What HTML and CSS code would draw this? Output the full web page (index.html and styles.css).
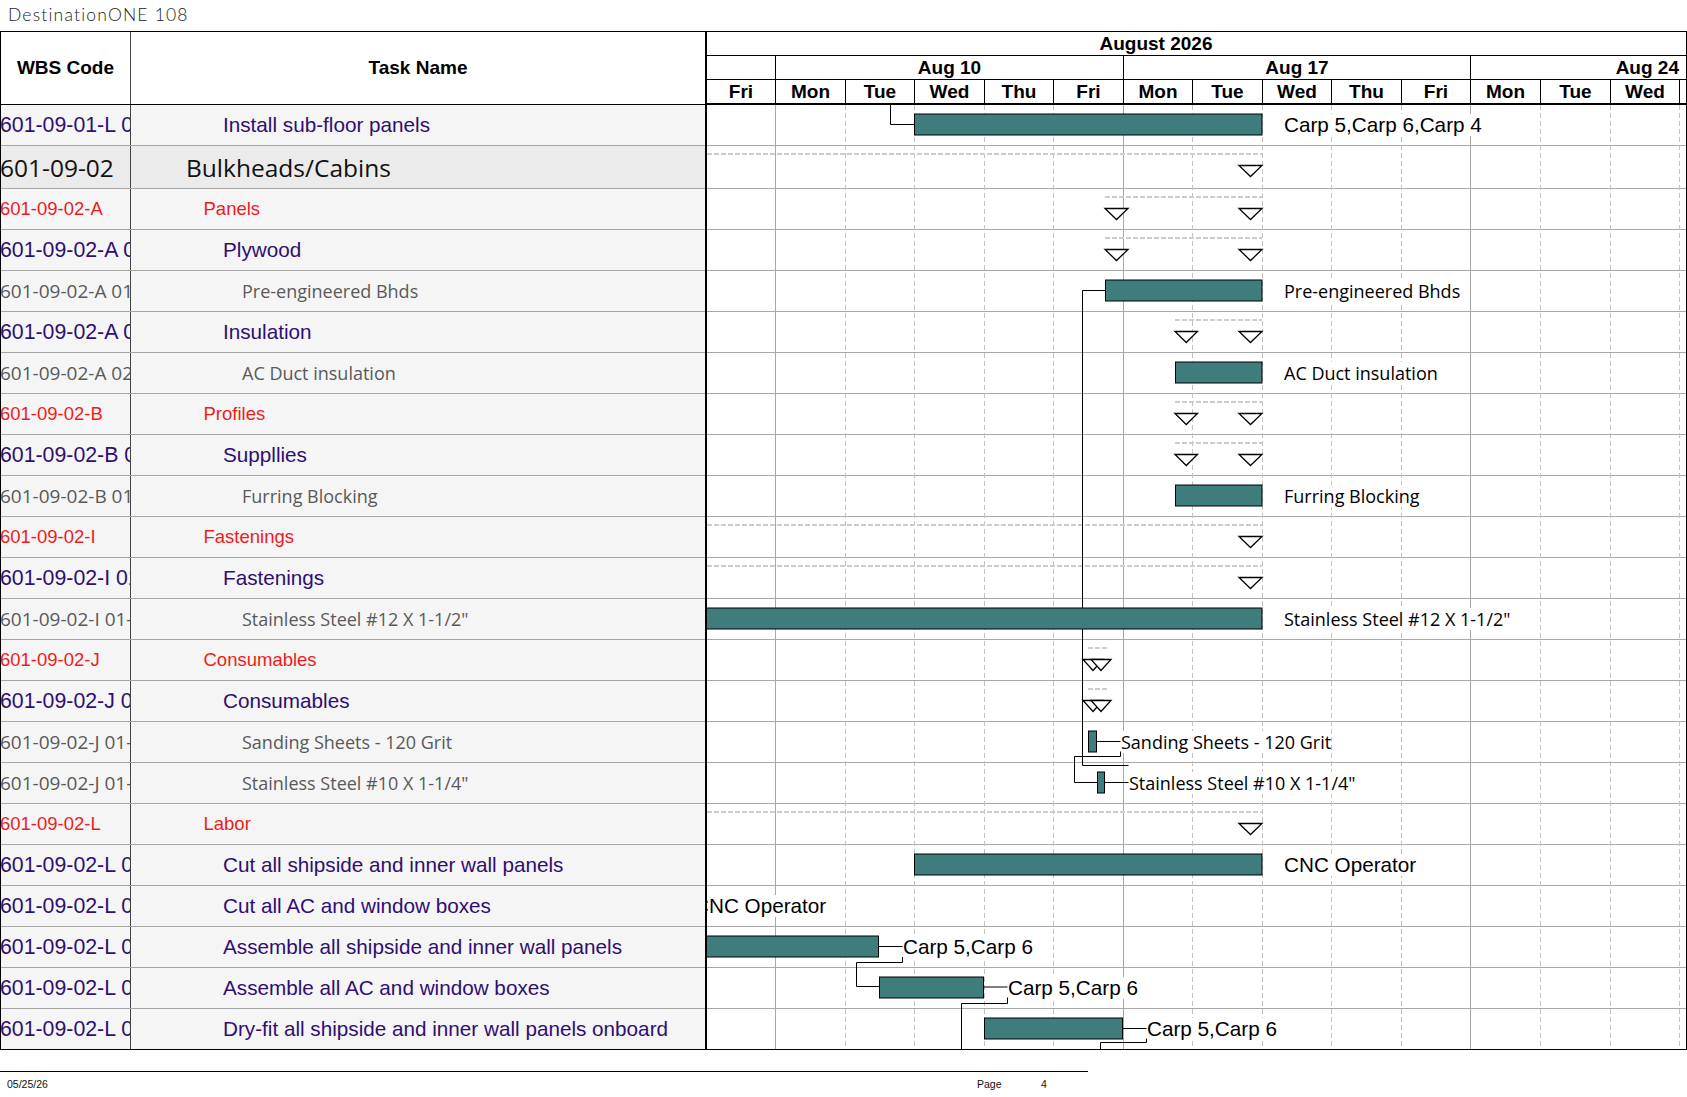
FILE: index.html
```html
<!DOCTYPE html>
<html>
<head>
<meta charset="utf-8">
<title>DestinationONE 108</title>
<link rel="stylesheet" href="styles.css">
</head>
<body>
<div class="title">DestinationONE 108</div>
<div class="chart">
  <div class="table">
    <div class="thead">
      <div class="c-wbs">WBS Code</div>
      <div class="c-task">Task Name</div>
    </div>
    <div class="row r-purple"><div class="c-wbs"><span>601-09-01-L 01</span></div><div class="c-task">Install sub-floor panels</div></div>
    <div class="row r-top"><div class="c-wbs"><span>601-09-02</span></div><div class="c-task">Bulkheads/Cabins</div></div>
    <div class="row r-red"><div class="c-wbs"><span>601-09-02-A</span></div><div class="c-task">Panels</div></div>
    <div class="row r-purple"><div class="c-wbs"><span>601-09-02-A 01</span></div><div class="c-task">Plywood</div></div>
    <div class="row r-grey"><div class="c-wbs"><span>601-09-02-A 01-01</span></div><div class="c-task">Pre-engineered Bhds</div></div>
    <div class="row r-purple"><div class="c-wbs"><span>601-09-02-A 02</span></div><div class="c-task">Insulation</div></div>
    <div class="row r-grey"><div class="c-wbs"><span>601-09-02-A 02-01</span></div><div class="c-task">AC Duct insulation</div></div>
    <div class="row r-red"><div class="c-wbs"><span>601-09-02-B</span></div><div class="c-task">Profiles</div></div>
    <div class="row r-purple"><div class="c-wbs"><span>601-09-02-B 01</span></div><div class="c-task">Suppllies</div></div>
    <div class="row r-grey"><div class="c-wbs"><span>601-09-02-B 01-01</span></div><div class="c-task">Furring Blocking</div></div>
    <div class="row r-red"><div class="c-wbs"><span>601-09-02-I</span></div><div class="c-task">Fastenings</div></div>
    <div class="row r-purple"><div class="c-wbs"><span>601-09-02-I 01</span></div><div class="c-task">Fastenings</div></div>
    <div class="row r-grey"><div class="c-wbs"><span>601-09-02-I 01-01</span></div><div class="c-task">Stainless Steel #12 X 1-1/2"</div></div>
    <div class="row r-red"><div class="c-wbs"><span>601-09-02-J</span></div><div class="c-task">Consumables</div></div>
    <div class="row r-purple"><div class="c-wbs"><span>601-09-02-J 01</span></div><div class="c-task">Consumables</div></div>
    <div class="row r-grey"><div class="c-wbs"><span>601-09-02-J 01-01</span></div><div class="c-task">Sanding Sheets - 120 Grit</div></div>
    <div class="row r-grey"><div class="c-wbs"><span>601-09-02-J 01-02</span></div><div class="c-task">Stainless Steel #10 X 1-1/4"</div></div>
    <div class="row r-red"><div class="c-wbs"><span>601-09-02-L</span></div><div class="c-task">Labor</div></div>
    <div class="row r-purple"><div class="c-wbs"><span>601-09-02-L 01</span></div><div class="c-task">Cut all shipside and inner wall panels</div></div>
    <div class="row r-purple"><div class="c-wbs"><span>601-09-02-L 02</span></div><div class="c-task">Cut all AC and window boxes</div></div>
    <div class="row r-purple"><div class="c-wbs"><span>601-09-02-L 03</span></div><div class="c-task">Assemble all shipside and inner wall panels</div></div>
    <div class="row r-purple"><div class="c-wbs"><span>601-09-02-L 04</span></div><div class="c-task">Assemble all AC and window boxes</div></div>
    <div class="row r-purple"><div class="c-wbs"><span>601-09-02-L 05</span></div><div class="c-task">Dry-fit all shipside and inner wall panels onboard</div></div>
  </div>
  <div class="gantt">
    <div class="ghead">
      <div class="g-month"><span>August 2026</span></div>
      <div class="g-weeks">
        <div class="w w0"></div>
        <div class="w w1">Aug 10</div>
        <div class="w w2">Aug 17</div>
        <div class="w w3">Aug 24</div>
      </div>
      <div class="g-days">
        <div class="d d69">Fri</div>
        <div class="d d70">Mon</div>
        <div class="d d69">Tue</div>
        <div class="d d70">Wed</div>
        <div class="d d69">Thu</div>
        <div class="d d70">Fri</div>
        <div class="d d69">Mon</div>
        <div class="d d70">Tue</div>
        <div class="d d69">Wed</div>
        <div class="d d70">Thu</div>
        <div class="d d69">Fri</div>
        <div class="d d70">Mon</div>
        <div class="d d70">Tue</div>
        <div class="d d69">Wed</div>
        <div class="d d-rest"></div>
      </div>
    </div>
    <div class="gbody">
      <svg class="gsvg" width="979" height="944" viewBox="707 105 979 944">
        <path class="grid-h" d="M707 145.5H1686M707 188.5H1686M707 229.5H1686M707 270.5H1686M707 311.5H1686M707 352.5H1686M707 393.5H1686M707 434.5H1686M707 475.5H1686M707 516.5H1686M707 557.5H1686M707 598.5H1686M707 639.5H1686M707 680.5H1686M707 721.5H1686M707 762.5H1686M707 803.5H1686M707 844.5H1686M707 885.5H1686M707 926.5H1686M707 967.5H1686M707 1008.5H1686"/>
        <path class="grid-d" d="M845.5 105V1049M914.5 105V1049M984.5 105V1049M1053.5 105V1049M1192.5 105V1049M1262.5 105V1049M1331.5 105V1049M1401.5 105V1049M1540.5 105V1049M1610.5 105V1049M1679.5 105V1049"/>
        <path class="grid-w" d="M775.5 105V1049M1123.5 105V1049M1470.5 105V1049"/>

        <path class="roll" d="M707 154H1262M1105 197H1262M1105 238H1262M1175 320H1262M1175 402H1262M1175 443H1262M707 525H1262M707 566H1262M1088 648H1107M1088 689H1107M707 812H1262"/>

        <polygon class="tri" points="1239,165.5 1262,165.5 1250.5,176.5"/>
        <polygon class="tri" points="1105,208.5 1128,208.5 1116.5,219.5"/>
        <polygon class="tri" points="1239,208.5 1262,208.5 1250.5,219.5"/>
        <polygon class="tri" points="1105,249.5 1128,249.5 1116.5,260.5"/>
        <polygon class="tri" points="1239,249.5 1262,249.5 1250.5,260.5"/>
        <polygon class="tri" points="1175,331.5 1197.5,331.5 1186.25,342.5"/>
        <polygon class="tri" points="1239,331.5 1262,331.5 1250.5,342.5"/>
        <polygon class="tri" points="1175,413.5 1197.5,413.5 1186.25,424.5"/>
        <polygon class="tri" points="1239,413.5 1262,413.5 1250.5,424.5"/>
        <polygon class="tri" points="1175,454.5 1197.5,454.5 1186.25,465.5"/>
        <polygon class="tri" points="1239,454.5 1262,454.5 1250.5,465.5"/>
        <polygon class="tri" points="1239,536.5 1262,536.5 1250.5,547.5"/>
        <polygon class="tri" points="1239,577.5 1262,577.5 1250.5,588.5"/>
        <polygon class="tri" points="1083,659.5 1103,659.5 1093,670.5"/>
        <polygon class="tri" points="1091,659.5 1111,659.5 1101,670.5"/>
        <polygon class="tri" points="1083,700.5 1103,700.5 1093,711.5"/>
        <polygon class="tri" points="1091,700.5 1111,700.5 1101,711.5"/>
        <polygon class="tri" points="1239,823.5 1262,823.5 1250.5,834.5"/>

        <path class="lnk" d="M890.5 105V124.5H914.5"/>
        <path class="lnk" d="M1105 290.5H1082.5V765.5H1128.5"/>
        <path class="lnk" d="M1096.5 741.5H1120.5"/>
        <path class="lnk" d="M1120.5 751.5V756.5H1074.5V782.5H1097.5"/>
        <path class="lnk" d="M1104.5 782.5H1128.5"/>
        <path class="lnk" d="M878.5 946.5H902.5"/>
        <path class="lnk" d="M902.5 957V962.5H856.5V986.5H879.5"/>
        <path class="lnk" d="M983.5 987H1007.5"/>
        <path class="lnk" d="M1007.5 997.5V1003.5H961.5V1050"/>
        <path class="lnk" d="M1122.5 1028.5H1146.5"/>
        <path class="lnk" d="M1146.5 1038.5V1042.5H1100.5V1050"/>

        <rect class="bar" x="914.5" y="114" width="347.5" height="21"/>
        <rect class="bar" x="1105.5" y="280" width="156.5" height="21"/>
        <rect class="bar" x="1175.5" y="362" width="86.5" height="21"/>
        <rect class="bar" x="1175.5" y="485" width="86.5" height="21"/>
        <rect class="bar" x="700" y="608" width="562" height="21"/>
        <rect class="bar" x="1088.5" y="731" width="8" height="21"/>
        <rect class="bar" x="1097.5" y="772" width="7" height="21"/>
        <rect class="bar" x="914.5" y="854" width="347.5" height="21"/>
        <rect class="bar" x="700" y="936" width="178.5" height="21"/>
        <rect class="bar" x="879.5" y="977" width="104" height="21"/>
        <rect class="bar" x="984.5" y="1018" width="138" height="21"/>
      </svg>
      <span class="lbl ar" style="left:577px;top:9px">Carp 5,Carp 6,Carp 4</span>
      <span class="lbl os" style="left:577px;top:175px">Pre-engineered Bhds</span>
      <span class="lbl os" style="left:577px;top:257px">AC Duct insulation</span>
      <span class="lbl os" style="left:577px;top:380px">Furring Blocking</span>
      <span class="lbl os" style="left:577px;top:503px">Stainless Steel #12 X 1-1/2"</span>
      <span class="lbl os" style="left:414px;top:626px">Sanding Sheets - 120 Grit</span>
      <span class="lbl os" style="left:422px;top:667px">Stainless Steel #10 X 1-1/4"</span>
      <span class="lbl ar" style="left:577px;top:749px">CNC Operator</span>
      <span class="lbl ar" style="left:-13px;top:790px">CNC Operator</span>
      <span class="lbl ar" style="left:196px;top:831px">Carp 5,Carp 6</span>
      <span class="lbl ar" style="left:301px;top:872px">Carp 5,Carp 6</span>
      <span class="lbl ar" style="left:440px;top:913px">Carp 5,Carp 6</span>
    </div>
  </div>
</div>
<div class="footer">
  <div class="f-line"></div>
  <div class="f-text">
    <span class="f-date">05/25/26</span>
    <span class="f-page">Page</span>
    <span class="f-num">4</span>
  </div>
</div>
</body>
</html>
```
FILE: styles.css
```css
* { box-sizing: border-box; }
body {
  margin: 0;
  background: #fff;
  font-family: "Liberation Sans", Arial, sans-serif;
  color: #000;
}
.title {
  height: 31px;
  line-height: 30px;
  padding-left: 8px;
  font-family: Lato, "Open Sans", sans-serif;
  font-weight: 300;
  font-size: 17.5px;
  letter-spacing: 1.2px;
  color: #222;
}
.chart {
  display: flex;
  width: 1687px;
  border: 1px solid #000;
}
.table { width: 704px; }
.thead {
  display: flex;
  height: 73px;
  border-bottom: 1px solid #000;
  background: #fff;
  font-weight: bold;
  font-size: 19px;
}
.thead .c-wbs, .thead .c-task { justify-content: center; }
.c-wbs {
  width: 130px;
  border-right: 1px solid #444;
  overflow: hidden;
  white-space: nowrap;
  display: flex;
  align-items: center;
}
.c-wbs span { margin-left: -1px; }
.c-task {
  width: 574px;
  display: flex;
  align-items: center;
  white-space: nowrap;
  overflow: hidden;
}
.row {
  display: flex;
  height: 41px;
  border-bottom: 1px solid #a6a6a6;
  background: #f5f5f5;
}
.row:last-child { height: 40px; border-bottom: 0; }
.r-top {
  height: 43px;
  background: #ebebeb;
  color: #111;
  font-family: "Open Sans", sans-serif;
  font-size: 24.5px;
}
.r-top .c-task { padding-left: 55px; }
.r-purple {
  color: #300e72;
  font-size: 20.7px;
}
.r-purple .c-wbs { font-size: 21.3px; }
.r-purple .c-task { padding-left: 92px; }
.r-red {
  color: #ee1c1c;
  font-size: 18.5px;
}
.r-red .c-task { padding-left: 72.5px; }
.r-grey {
  color: #595959;
  font-family: "Open Sans", sans-serif;
  font-size: 18px;
}
.r-grey .c-wbs { font-size: 19px; }
.r-grey .c-task { padding-left: 111px; }

.gantt {
  width: 981px;
  border-left: 2px solid #000;
}
.ghead {
  height: 73px;
  border-bottom: 2px solid #000;
  font-weight: bold;
  font-size: 19px;
}
.g-month {
  height: 24px;
  border-bottom: 1px solid #000;
}
.g-month span {
  display: block;
  width: 898px;
  text-align: center;
  line-height: 23px;
}
.g-weeks {
  display: flex;
  height: 24px;
  border-bottom: 1px solid #000;
}
.g-days {
  display: flex;
  height: 23px;
}
.w, .d {
  border-right: 1px solid #000;
  display: flex;
  align-items: center;
  justify-content: center;
  white-space: nowrap;
}
.w0 { width: 69px; }
.w1 { width: 348px; }
.w2 { width: 347px; }
.w3 { width: 215px; border-right: 0; justify-content: flex-end; padding-right: 7px; }
.d69 { width: 69px; }
.d70 { width: 70px; }
.d-rest { width: 6px; border-right: 0; }

.gbody {
  position: relative;
  height: 944px;
  overflow: hidden;
}
.gsvg { display: block; }
.grid-h { stroke: #a8a8a8; stroke-width: 1; fill: none; }
.grid-w { stroke: #a8a8a8; stroke-width: 1; fill: none; }
.grid-d { stroke: #c2c2c2; stroke-width: 1; fill: none; stroke-dasharray: 5 3; }
.roll { stroke: #cdcdcd; stroke-width: 2; fill: none; stroke-dasharray: 5 2; }
.tri { fill: #fff; stroke: #000; stroke-width: 1.3; }
.lnk { fill: none; stroke: #000; stroke-width: 1; }
.bar { fill: #3f7c7c; stroke: #000; stroke-width: 1; }

.lbl {
  position: absolute;
  white-space: nowrap;
  background: #fff;
  height: 22px;
  line-height: 22px;
  color: #000;
}
.lbl.ar { font-family: "Liberation Sans", Arial, sans-serif; font-size: 20.7px; }
.lbl.os { font-family: "Open Sans", sans-serif; font-size: 18px; }

.footer {
  margin-top: 21px;
  width: 1088px;
}
.f-line { height: 1px; background: #000; }
.f-text {
  display: flex;
  align-items: center;
  height: 24px;
  font-size: 10.5px;
  color: #111;
}
.f-date { width: 977px; padding-left: 7px; }
.f-page { width: 64px; }
```
